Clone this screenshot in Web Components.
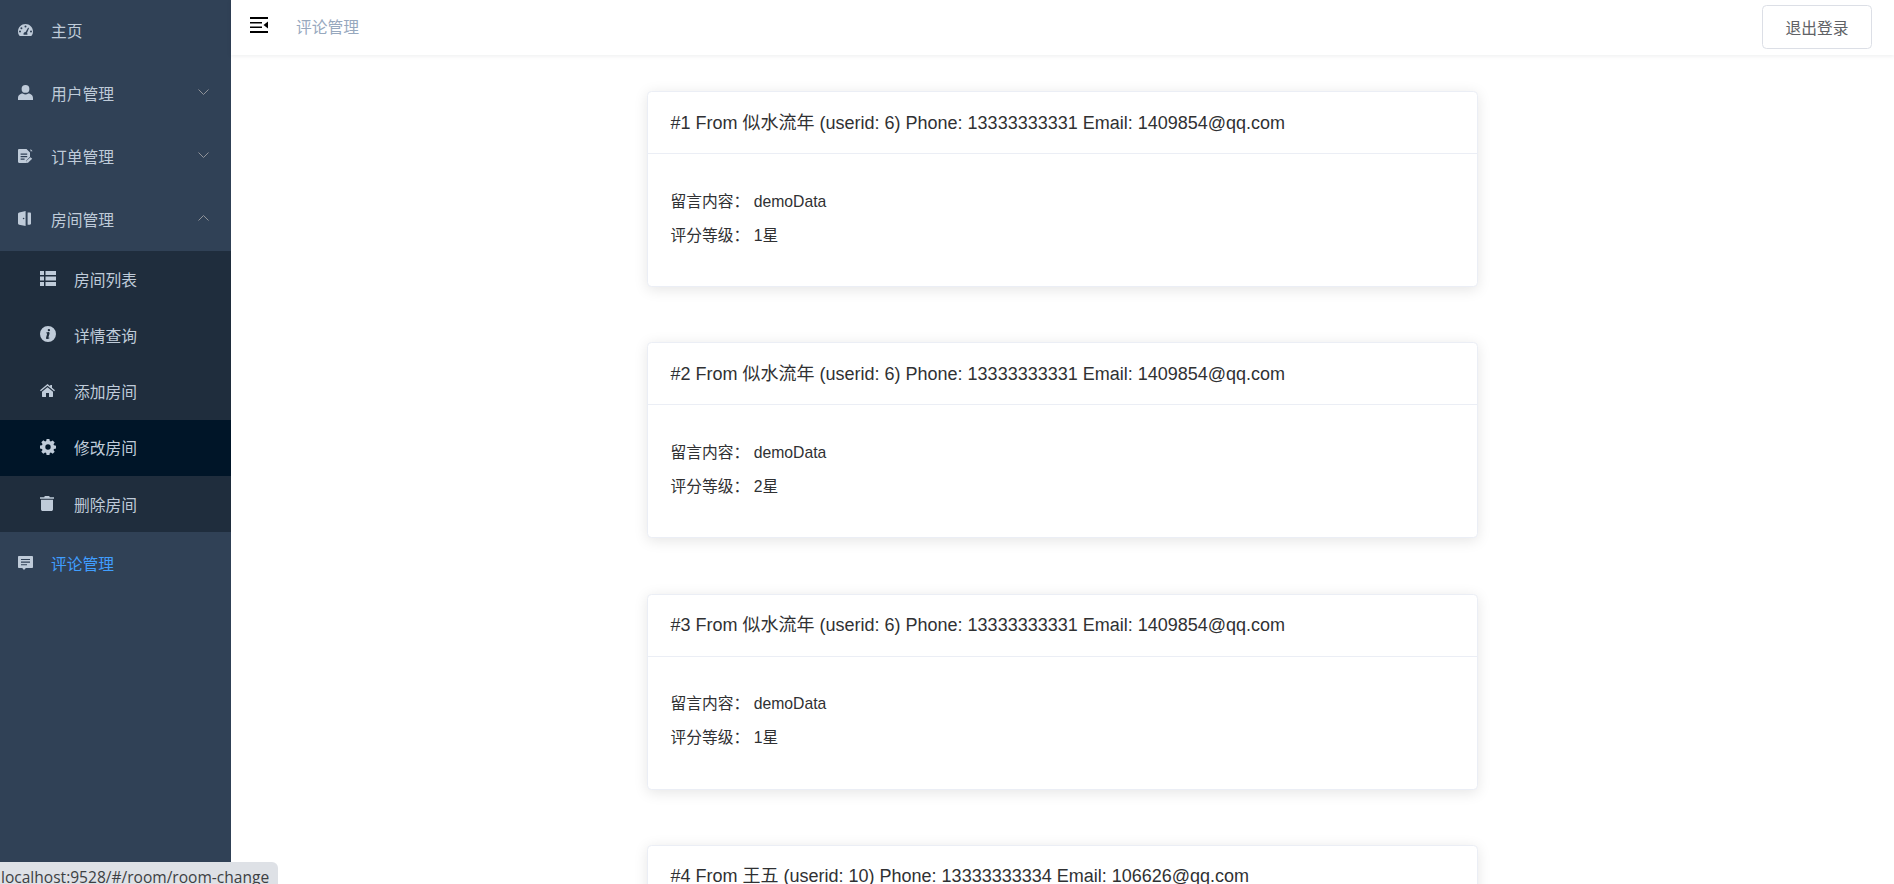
<!DOCTYPE html>
<html lang="zh">
<head>
<meta charset="utf-8">
<title>评论管理</title>
<style>
html,body{margin:0;height:884px;overflow:hidden;background:#fff}
body{font-family:"Liberation Sans","Noto Sans CJK SC",sans-serif;font-size:15.75px}
</style>
</head>
<body>
<app-shell>
  <side-menu slot="side">
    <menu-item icon="gauge" first>主页</menu-item>
    <menu-item icon="user" arrow="down">用户管理</menu-item>
    <menu-item icon="doc" arrow="down">订单管理</menu-item>
    <menu-item icon="door" arrow="up">房间管理</menu-item>
    <sub-menu>
      <menu-item icon="list" sub>房间列表</menu-item>
      <menu-item icon="info" sub>详情查询</menu-item>
      <menu-item icon="home" sub>添加房间</menu-item>
      <menu-item icon="gear" sub hover>修改房间</menu-item>
      <menu-item icon="trash" sub>删除房间</menu-item>
    </sub-menu>
    <menu-item icon="comment" active>评论管理</menu-item>
  </side-menu>
  <top-bar slot="top" crumb="评论管理" action="退出登录"></top-bar>
  <comment-card num="1" who="似水流年" uid="6" phone="13333333331" mail="1409854@qq.com" text="demoData" stars="1"></comment-card>
  <comment-card num="2" who="似水流年" uid="6" phone="13333333331" mail="1409854@qq.com" text="demoData" stars="2"></comment-card>
  <comment-card num="3" who="似水流年" uid="6" phone="13333333331" mail="1409854@qq.com" text="demoData" stars="1"></comment-card>
  <comment-card num="4" who="王五" uid="10" phone="13333333334" mail="106626@qq.com"></comment-card>
</app-shell>
<status-bubble>localhost:9528/#/room/room-change</status-bubble>

<script>
const ICONS = {
  gauge:{w:15,h:12,d:'<path fill-rule="evenodd" d="M7.5 0C3.4 0 0 3.3 0 7.4c0 1.6.4 3 1.2 4.1.2.3.5.5.9.5h10.8c.4 0 .7-.2.9-.5.8-1.1 1.2-2.5 1.2-4.1C15 3.3 11.6 0 7.5 0zM7.5 1.6a1 1 0 1 1 0 2 1 1 0 0 1 0-2zM3.4 3.3a1 1 0 1 1 0 2 1 1 0 0 1 0-2zM2 6.6a1 1 0 1 1 0 2 1 1 0 0 1 0-2zm11 0a1 1 0 1 1 0 2 1 1 0 0 1 0-2zM10.6 3.7c.3.1.4.4.3.7L9 9c.3.3.5.7.5 1.1 0 .2 0 .4-.1.6H5.6c-.1-.2-.1-.4-.1-.6C5.5 9 6.4 8.1 7.6 8.1l2.3-4.1c.1-.3.4-.4.7-.3z"/>'},
  user:{w:15,h:15,d:'<circle cx="7.5" cy="3.9" r="3.9"/><path d="M0 13.1C0 10.2 2.6 8.6 4.7 8.6c.9.6 1.8.9 2.8.9s1.9-.3 2.8-.9c2.1 0 4.7 1.6 4.7 4.5V15H0z"/>'},
  doc:{w:15,h:14,d:'<path d="M1.2 0h7.3l3.5 3.6v4.2L8.4 11.4 8 14H1.2C.5 14 0 13.5 0 12.8V1.2C0 .5.5 0 1.2 0z"/><path d="M2.6 5.2h6.6M2.6 7.7h6.6M2.6 10.2h4" stroke="#304156" stroke-width="1.2" fill="none"/><path d="M12.4 8.2l1.8 1.6-4.2 3.9-2 .3.3-2z"/><path d="M12.5 0l2.1 2.3h-2.1z"/>'},
  door:{w:13,h:15,d:'<path fill-rule="evenodd" d="M7.6 0v15L1.2 13.7C.5 13.6 0 13 0 12.3V2.9c0-.7.5-1.3 1.2-1.4zM5.6 6.7a.8.8 0 1 0 0 1.6.8.8 0 0 0 0-1.6z"/><path d="M9.6 1.5h2.3c.6 0 1.1.5 1.1 1.1v10c0 .6-.5 1.1-1.1 1.1H9.6z"/>'},
  list:{w:16,h:15,d:'<path d="M0 0h4v4H0zM5.5 0H16v4H5.5zM0 5.5h4v4H0zM5.5 5.5H16v4H5.5zM0 11h4v4H0zM5.5 11H16v4H5.5z"/>'},
  info:{w:16,h:16,d:'<path fill-rule="evenodd" d="M8 0a8 8 0 1 1 0 16A8 8 0 0 1 8 0zm.9 2.9a1.2 1.2 0 1 0 0 2.4 1.2 1.2 0 0 0 0-2.4zM6.3 6.6l-.2.7c.9-.2 1.2 0 1 .8l-1 3.3c-.3 1.2.3 1.7 1.4 1.6.6 0 1.2-.3 1.9-.7l.2-.6c-.8.3-1.3.2-1.1-.6l1-3.4c.3-1-.2-1.6-1.2-1.6-.6 0-1.2.2-2 .5z"/>'},
  home:{w:15,h:13,d:'<path d="M7.5 0L0 6.3l.9 1L7.5 1.8l6.6 5.5.9-1-3-2.5V1h-1.8v1.3z"/><path d="M7.5 3.2L2 7.8v4.7c0 .3.2.5.5.5H6V9h3v4h3.5c.3 0 .5-.2.5-.5V7.8z"/>'},
  gear:{w:16,h:16,d:'<path fill-rule="evenodd" d="M6.6 0h2.8l.4 2.1 1.1.5 1.8-1.2 2 2-1.2 1.8.5 1.1 2 .4v2.8l-2 .4-.5 1.1 1.2 1.8-2 2-1.8-1.2-1.1.5-.4 2H6.6l-.4-2-1.1-.5-1.8 1.2-2-2 1.2-1.8-.5-1.1-2-.4V6.6l2-.4.5-1.1-1.2-1.8 2-2 1.8 1.2 1.1-.5zM8 5.3a2.7 2.7 0 1 0 0 5.4 2.7 2.7 0 0 0 0-5.4z"/>'},
  trash:{w:14,h:15,d:'<path d="M4.8 0h4.4l.6 1.3H14v1.5H0V1.3h4.2z"/><path d="M1 3.8h12v9.4c0 1-.8 1.8-1.8 1.8H2.8C1.8 15 1 14.2 1 13.2z"/>'},
  comment:{w:15,h:14,d:'<path fill-rule="evenodd" d="M.8 0h13.4c.4 0 .8.4.8.8v10.4c0 .4-.4.8-.8.8H7.9L6 14l-1.8-2H.8c-.4 0-.8-.4-.8-.8V.8C0 .4.4 0 .8 0zM3 3v1.100h9V3zm0 2.600v1.100h9V5.600zm0 2.600v1.100h6V8.200z"/>'}
};

function tpl(html){const t=document.createElement('template');t.innerHTML=html;return t;}
function attach(el,t){el.attachShadow({mode:'open'}).appendChild(t.content.cloneNode(true));return el.shadowRoot;}

const shellT=tpl(`<style>
:host{display:flex;height:884px;width:100%;overflow:hidden}
.side{flex:0 0 231px;height:100%;background:#304156}
.main{flex:1;min-width:0;display:flex;flex-direction:column}
.content{display:flex;flex-direction:column;align-items:center;gap:55.2px;padding-top:36.2px}
</style>
<div class="side"><slot name="side"></slot></div>
<div class="main"><slot name="top"></slot><div class="content"><slot></slot></div></div>`);
customElements.define('app-shell',class extends HTMLElement{constructor(){super();attach(this,shellT);}});

const sideT=tpl(`<style>:host{display:block;margin-top:-1px;color:#bfcbd9}</style><slot></slot>`);
customElements.define('side-menu',class extends HTMLElement{constructor(){super();attach(this,sideT);}});

const subT=tpl(`<style>:host{display:block;background:#1f2d3d}</style><slot></slot>`);
customElements.define('sub-menu',class extends HTMLElement{constructor(){super();attach(this,subT);}});

const itemT=tpl(`<style>
:host{display:flex;align-items:center;height:63px;padding-left:18px;box-sizing:border-box;position:relative;color:#bfcbd9;font-size:15.75px;white-space:nowrap}
:host([sub]){height:56.25px;padding-left:40px;background:#1f2d3d}
:host([hover]){background:#001528}
:host([active]){color:#409eff}
.ic{flex:0 0 auto;width:16px;margin-right:17px;display:flex;justify-content:flex-start;transform:translateY(-1px)}
:host([sub]) .ic{margin-right:18px}
svg.i{fill:#bfcbd9;display:block}
.arrow{position:absolute;left:198px;top:50%;margin-top:-4.5px;width:11px;height:6px;fill:none;stroke:#909399;stroke-width:1}
</style>
<span class="ic"></span><span><slot></slot></span>`);
customElements.define('menu-item',class extends HTMLElement{
  constructor(){super();attach(this,itemT);}
  connectedCallback(){
    const ic=ICONS[this.getAttribute('icon')],r=this.shadowRoot;
    r.querySelector('.ic').innerHTML=`<svg class="i" width="${ic.w}" height="${ic.h}" viewBox="0 0 ${ic.w} ${ic.h}">${ic.d}</svg>`;
    const a=this.getAttribute('arrow');
    if(a&&!r.querySelector('.arrow')){
      const s=document.createElementNS('http://www.w3.org/2000/svg','svg');
      s.setAttribute('class','arrow');s.setAttribute('viewBox','0 0 11 6');
      s.innerHTML=a==='down'?'<path d="M.5.5l5 5 5-5"/>':'<path d="M.5 5.5l5-5 5 5"/>';
      r.appendChild(s);
    }
  }
});

const topT=tpl(`<style>
:host{display:flex;align-items:center;flex:0 0 auto;height:55px;box-sizing:border-box;padding:0 22px 0 19px;background:#fff;box-shadow:0 1px 4.5px rgba(0,21,41,.08);position:relative}
.ham{display:block;width:18px;height:16px;margin-right:28px;margin-top:-5px}
.crumb{color:#97a8be;font-size:15.75px;margin-top:-3px}
.sp{flex:1}
button{width:110px;height:44px;margin-top:-1px;background:#fff;border:1px solid #dcdfe6;border-radius:4.5px;color:#606266;font:15.75px "Liberation Sans","Noto Sans CJK SC",sans-serif;padding:0}
</style>
<svg class="ham" viewBox="0 0 18 16"><path d="M0 0h18v2H0zM0 14h18v2H0zM0 5h12v1.5H0zM0 9.5h12V11H0z" fill="#000"/><path d="M18 4.5v7L13.5 8z" fill="#000"/></svg>
<span class="crumb"></span><span class="sp"></span><button></button>`);
customElements.define('top-bar',class extends HTMLElement{
  constructor(){super();attach(this,topT);}
  connectedCallback(){
    this.shadowRoot.querySelector('.crumb').textContent=this.getAttribute('crumb');
    this.shadowRoot.querySelector('button').textContent=this.getAttribute('action');
  }
});

const cardT=tpl(`<style>
:host{display:block;flex:0 0 auto;width:831px;box-sizing:border-box;background:#fff;border:1px solid #ebeef5;border-radius:4.5px;box-shadow:0 2.25px 13.5px rgba(0,0,0,.1);color:#303133}
.h{height:62px;box-sizing:border-box;padding:0 22.5px;display:flex;align-items:center;font-size:18px;line-height:1;border-bottom:1px solid #ebeef5;white-space:nowrap}
.b{height:132px;box-sizing:border-box;padding:30.7px 22.5px 0;font-size:15.75px}
.r{height:34px;line-height:34px;white-space:pre}
</style>
<div class="h"></div><div class="b"></div>`);
customElements.define('comment-card',class extends HTMLElement{
  constructor(){super();attach(this,cardT);}
  connectedCallback(){
    const g=k=>this.getAttribute(k),r=this.shadowRoot,b=r.querySelector('.b');
    r.querySelector('.h').textContent=`#${g('num')} From ${g('who')} (userid: ${g('uid')}) Phone: ${g('phone')} Email: ${g('mail')}`;
    b.textContent='';
    const row=t=>{const d=document.createElement('div');d.className='r';d.textContent=t;b.appendChild(d);};
    if(g('text')) row(`留言内容： ${g('text')}`);
    if(g('stars')) row(`评分等级： ${g('stars')}星`);
  }
});

const bubbleT=tpl(`<style>
:host{position:fixed;left:0;bottom:0;height:22px;width:278px;box-sizing:border-box;background:#dee1e6;border-top-right-radius:6px;color:#3c4043;font:15.55px/30px "Open Sans",sans-serif;padding-left:1px;white-space:nowrap;overflow:hidden}
</style><slot></slot>`);
customElements.define('status-bubble',class extends HTMLElement{constructor(){super();attach(this,bubbleT);}});
</script>
</body>
</html>
